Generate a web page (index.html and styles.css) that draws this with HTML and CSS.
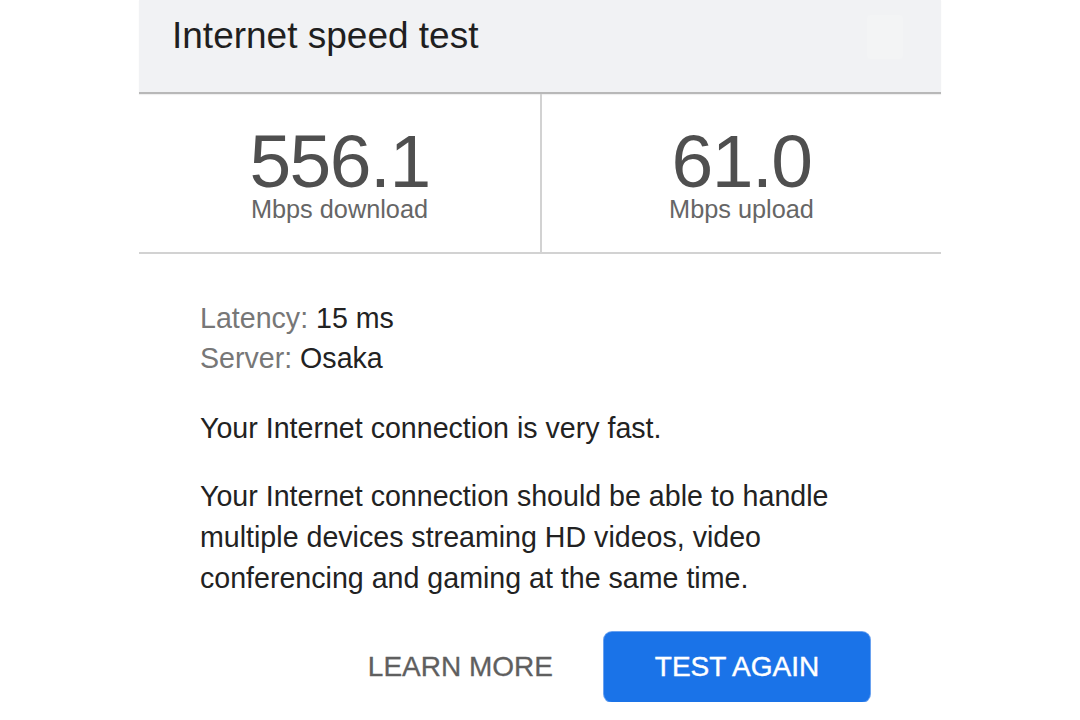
FILE: index.html
```html
<!DOCTYPE html>
<html lang="en">
<head>
<meta charset="utf-8">
<title>Internet speed test</title>
<link rel="stylesheet" href="styles.css">
</head>
<body>
<div class="card">
  <header class="card-header">
    <h1 class="title">Internet speed test</h1>
    <svg class="ghost-icon" width="40" height="48" viewBox="0 0 40 48" aria-hidden="true">
      <rect x="2" y="2" width="36" height="44" rx="4" fill="#f3f4f5"/>
    </svg>
  </header>
  <section class="stats">
    <div class="stat">
      <div class="stat-value">556.1</div>
      <div class="stat-label">Mbps download</div>
    </div>
    <div class="stat">
      <div class="stat-value">61.0</div>
      <div class="stat-label">Mbps upload</div>
    </div>
  </section>
  <section class="details">
    <div class="meta">
      <div class="meta-row"><span class="meta-key">Latency:</span> 15 ms</div>
      <div class="meta-row"><span class="meta-key">Server:</span> Osaka</div>
    </div>
    <p class="summary">Your Internet connection is very fast.</p>
    <p class="description">Your Internet connection should be able to handle multiple devices streaming HD videos, video conferencing and gaming at the same time.</p>
  </section>
  <div class="actions">
    <button class="btn btn-text">LEARN MORE</button>
    <button class="btn btn-primary">TEST AGAIN</button>
  </div>
</div>
</body>
</html>
```
FILE: styles.css
```css
* { box-sizing: border-box; }

html, body {
  margin: 0;
  padding: 0;
  background: #ffffff;
}

body {
  font-family: "Liberation Sans", Arial, Helvetica, sans-serif;
  color: #222222;
}

.card {
  width: 802px;
  margin-left: 139px;
}

.card-header {
  display: flex;
  align-items: flex-start;
  background: #f1f2f4;
  padding: 14px 36px 0 33px;
  height: 94px;
  border-bottom: 2px solid #b8b8b8;
  box-shadow: 0 1px 1px rgba(0, 0, 0, 0.06);
}

.title {
  margin: 0;
  font-size: 37px;
  line-height: 44px;
  font-weight: normal;
  color: #1f1f1f;
}

.ghost-icon {
  margin-left: auto;
  margin-top: -1px;
}

.stats {
  display: grid;
  grid-template-columns: 1fr 1fr;
  border-bottom: 2px solid #d2d2d2;
}

.stat {
  text-align: center;
  padding: 34px 0 28px;
}

.stat + .stat {
  border-left: 2px solid #d2d2d2;
}

.stat-value {
  font-size: 75px;
  line-height: 66px;
  color: #4f4f4f;
  letter-spacing: -1.5px;
}

.stat-label {
  font-size: 25.3px;
  line-height: 30px;
  color: #666666;
}

.details {
  padding: 44px 61px 0 61px;
}

.meta-row {
  font-size: 28.6px;
  line-height: 40px;
  color: #222222;
}

.meta-key {
  color: #777777;
}

.summary {
  margin: 30px 0 0;
  font-size: 28.6px;
  line-height: 40px;
}

.description {
  margin: 28px 0 0;
  font-size: 28.6px;
  line-height: 41px;
}

.actions {
  display: flex;
  justify-content: flex-end;
  align-items: center;
  gap: 27px;
  padding: 33px 71px 0 0;
}

.btn {
  font-family: "Liberation Sans", Arial, Helvetica, sans-serif;
  font-size: 28px;
  line-height: 34px;
  border: none;
  background: none;
  cursor: pointer;
  padding: 18px 24px;
}

.btn-text {
  color: #5f5f5f;
  -webkit-text-stroke: 0.3px #5f5f5f;
}

.btn-primary {
  width: 266px;
  height: 70px;
  padding: 0;
  background: #1a73e8;
  color: #ffffff;
  border-radius: 8px;
  box-shadow: 0 0 0 1px #6aa2f0;
  -webkit-text-stroke: 0.4px #ffffff;
}
```
